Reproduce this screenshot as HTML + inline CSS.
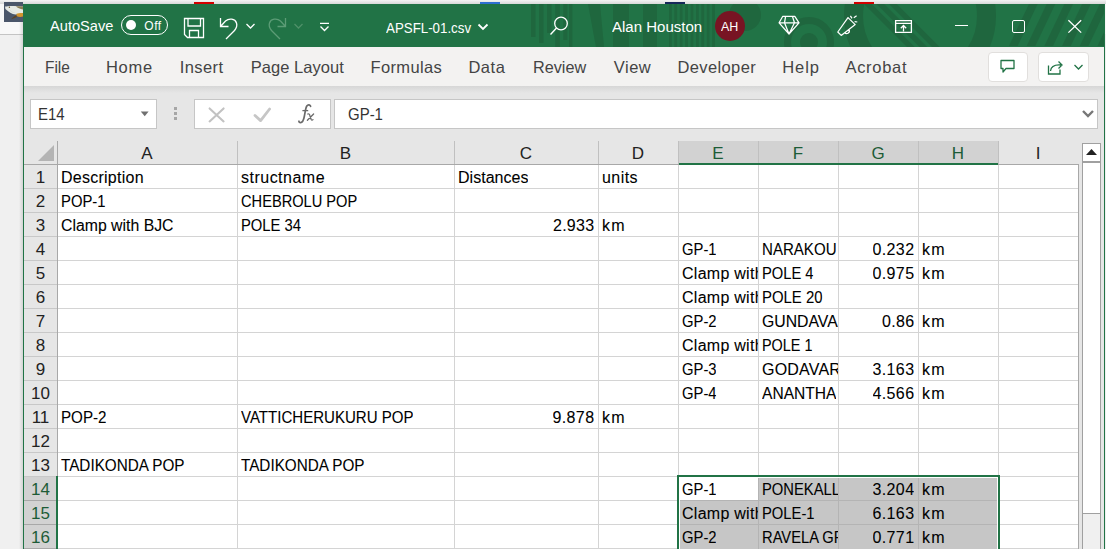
<!DOCTYPE html><html><head><meta charset="utf-8"><style>
*{box-sizing:border-box;margin:0;padding:0}
html,body{width:1106px;height:549px;overflow:hidden;background:#f0f0f0;font-family:"Liberation Sans",sans-serif}
div,span,svg{position:absolute}
.t{white-space:pre;line-height:1}
.tab{top:59px;font-size:16.5px;color:#444}
.c{font-size:16px;color:#000;-webkit-text-stroke:0.08px #000;white-space:pre;line-height:1;overflow:hidden}
.rh{font-size:17px;color:#222;line-height:1;text-align:center;width:33px;left:24px}
.ch{font-size:17px;color:#222;line-height:1;text-align:center;top:145px}
</style></head><body>
<div style="left:0;top:0;width:1106px;height:34px;background:#f8f8f8"></div>
<div style="left:0;top:34px;width:23px;height:1px;background:#c4c4c4"></div>
<div style="left:19px;top:0;width:4px;height:549px;background:linear-gradient(90deg,rgba(0,0,0,0),rgba(0,0,0,.12))"></div>
<div style="left:0;top:0;width:1106px;height:4px;background:linear-gradient(#f4f4f4,#d8d8d8)"></div>
<svg style="left:4px;top:2px" width="19" height="20" viewBox="4 2 19 20"><rect x="4" y="2" width="19" height="20" fill="#4b566a"/><path d="M5,6.6 C7,6 10,5.8 14,6 L23,6.4 L23,13 C20,13.6 18,14.4 15.5,14.6 C12,14.2 8.5,11.8 5.4,9 Z" fill="#e6e9e4"/><path d="M16,6.2 L23,6.4 L23,9.5 C20,8.8 17.5,8 16,6.2 Z" fill="#8a7e55"/><path d="M9,9.5 C11,11 13,12.5 15.5,13 C13,12.8 11,11.5 9,9.5 Z" fill="#b8bdb5"/><circle cx="9.4" cy="7.3" r="0.7" fill="#6d5a32"/><path d="M16.5,13.8 C18.5,13 21,13 23,13.2 L23,16.6 C21,17.4 18.5,17.2 16.5,16 Z" fill="#d3952d"/><path d="M11.2,19.2 C12.5,17.5 14,16 16.4,15.2 L16.8,17 C15,17.8 13,18.6 11.2,19.2 Z" fill="#5e4320"/></svg>
<div style="left:194px;top:2px;width:20px;height:2px;background:#d40000"></div>
<div style="left:480px;top:2px;width:20px;height:2px;background:#2f6fd1"></div>
<div style="left:665px;top:2px;width:20px;height:2px;background:#17285a"></div>
<div style="left:854px;top:2px;width:20px;height:2px;background:#d40000"></div>
<div style="left:23px;top:4px;width:1082px;height:545px;background:#e6e6e6"></div>
<div style="left:23px;top:4px;width:1px;height:545px;background:#217346"></div>
<div style="left:1104px;top:4px;width:1px;height:545px;background:#217346"></div>
<div style="left:24px;top:4px;width:1080px;height:43px;background:#217346;overflow:hidden"></div>
<svg style="left:24px;top:4px" width="1080" height="43" viewBox="24 4 1080 43">
<g fill="#1f663e" opacity="0.9">
<rect x="531" y="4" width="4.5" height="33"/>
<rect x="539" y="4" width="4.5" height="39"/>
<rect x="547" y="4" width="4.5" height="29"/>
<rect x="555.3" y="4" width="4.5" height="43"/>
<rect x="563.4" y="4" width="4" height="36"/>
<rect x="569" y="4" width="3.4" height="43"/>
<path d="M588,4 L600,4 L604,47 L596,47 Z"/>
<rect x="613" y="4" width="16" height="43"/>
<rect x="643" y="4" width="14" height="43"/>
<rect x="669.0" y="4" width="2.7" height="43"/>
<rect x="674.4" y="4" width="2.7" height="43"/>
<rect x="679.8" y="4" width="2.7" height="43"/>
<rect x="685.2" y="4" width="2.7" height="43"/>
<rect x="690.6" y="4" width="2.7" height="43"/>
<rect x="696.0" y="4" width="2.7" height="43"/>
<rect x="701.4" y="4" width="2.7" height="43"/>
<rect x="706.8" y="4" width="2.7" height="43"/>
<rect x="712.2" y="4" width="2.7" height="43"/>
<circle cx="745" cy="15" r="16"/>
</g>
<circle cx="809" cy="42" r="21.5" fill="none" stroke="#1f663e" stroke-width="7"/>
<circle cx="809" cy="42" r="9" fill="#1f663e"/>
<circle cx="920" cy="16" r="66.5" fill="none" stroke="#1f663e" stroke-width="19"/>
<polygon points="864.0,4 871.7,4 915.7,48 908.0,48" fill="#1f663e"/>
<polygon points="876.5,4 884.2,4 928.2,48 920.5,48" fill="#1f663e"/>
<polygon points="889.0,4 896.7,4 940.7,48 933.0,48" fill="#1f663e"/>
<polygon points="1009.0,46 1017.6,46 1037.6,4 1029.0,4" fill="#1f663e"/>
<polygon points="1026.7,46 1035.3,46 1055.3,4 1046.7,4" fill="#1f663e"/>
<polygon points="1044.4,46 1053.0,46 1073.0,4 1064.4,4" fill="#1f663e"/>
<polygon points="1062.1,46 1070.6999999999998,46 1090.6999999999998,4 1082.1,4" fill="#1f663e"/>
<polygon points="1079.8,46 1088.3999999999999,46 1108.3999999999999,4 1099.8,4" fill="#1f663e"/>
<polygon points="1097.5,46 1106.1,46 1126.1,4 1117.5,4" fill="#1f663e"/>
</svg>
<span class="t" style="left:49.80px;top:18px;font-size:15px;color:#fff;transform:scaleX(0.9754);transform-origin:0 0;">AutoSave</span>
<div style="left:121px;top:15px;width:47px;height:20px;border:1px solid #fff;border-radius:10px"></div>
<div style="left:126px;top:20px;width:10px;height:10px;background:#fff;border-radius:50%"></div>
<span class="t" style="left:144.30px;top:20px;font-size:12px;color:#fff;letter-spacing:0.500px;">Off</span>
<svg style="left:183px;top:17px" width="23" height="22" viewBox="0 0 23 22"><path d="M1.5,1.5 H20.5 V20.5 H4.5 L1.5,17.5 Z M5,1.5 V9 H17.5 V1.5 M6.5,20.5 V13.5 H15.5 V20.5" fill="none" stroke="#fff" stroke-width="1.3"/></svg>
<svg style="left:216px;top:15px" width="26" height="25" viewBox="0 0 26 25"><path d="M4.5,3 V11.5 H12.5 M4.5,11.5 L9.5,6 C13,3 19,3.5 20.5,8 C21.5,11 20.5,13 18.5,15.5 L10,24" fill="none" stroke="#fff" stroke-width="1.3"/></svg>
<svg style="left:245px;top:22px" width="11" height="8" viewBox="0 0 11 8"><path d="M1.5,2 L5.5,6 L9.5,2" fill="none" stroke="#fff" stroke-width="1.3"/></svg>
<svg style="left:264px;top:15px" width="26" height="25" viewBox="0 0 26 25"><path d="M21.5,3 V11.5 H13.5 M21.5,11.5 L16.5,6 C13,3 7,3.5 5.5,8 C4.5,11 5.5,13 7.5,15.5 L16,24" fill="none" stroke="#5c9c76" stroke-width="1.3"/></svg>
<svg style="left:293px;top:22px" width="11" height="8" viewBox="0 0 11 8"><path d="M1.5,2 L5.5,6 L9.5,2" fill="none" stroke="#4f9068" stroke-width="1.3"/></svg>
<svg style="left:318px;top:20px" width="13" height="13" viewBox="0 0 13 13"><path d="M2,3.3 H11 M2.5,6.5 L6.5,10.5 L10.5,6.5" fill="none" stroke="#fff" stroke-width="1.3"/></svg>
<span class="t" style="left:385.80px;top:20px;font-size:15.5px;color:#fff;transform:scaleX(0.8587);transform-origin:0 0;">APSFL-01.csv</span>
<svg style="left:476px;top:21px" width="14" height="11" viewBox="0 0 14 11"><path d="M2.5,3.5 L7,8 L11.5,3.5" fill="none" stroke="#fff" stroke-width="1.8"/></svg>
<svg style="left:548px;top:14px" width="22" height="23" viewBox="0 0 22 23"><circle cx="13" cy="9.5" r="6.3" fill="none" stroke="#fff" stroke-width="1.3"/><path d="M8.5,14 L2.5,20.5" stroke="#fff" stroke-width="1.4"/></svg>
<span class="t" style="left:611.70px;top:19px;font-size:15.5px;color:#fff;transform:scaleX(0.9689);transform-origin:0 0;">Alan Houston</span>
<div style="left:715px;top:11px;width:30px;height:30px;border-radius:50%;background:#781423"></div>
<span class="t" style="left:720.50px;top:20px;font-size:13px;color:#fff;transform:scaleX(0.9613);transform-origin:0 0;">AH</span>
<svg style="left:770px;top:10px" width="36" height="30" viewBox="770 10 36 30"><path d="M782.8,16.3 H794.8 L799,22.8 L789,34 L779.1,22.8 Z M779.1,22.8 H799 M785.6,16.3 L784.5,22.8 L789,34 L794.5,22.8 L792.4,16.3" fill="none" stroke="#fff" stroke-width="1.25" stroke-linejoin="round"/></svg>
<svg style="left:830px;top:10px" width="32" height="30" viewBox="830 10 32 30"><path d="M848,17.6 L855.2,24.6 L841.2,35.4 L837.8,32 Z M844.7,32.7 A2.65,2.65 0 0 0 848.9,29.5 M850.4,15.8 L852,18.4 M853.8,17.8 L856.6,15.8 M854.6,21.6 L857.3,22" fill="none" stroke="#fff" stroke-width="1.25" stroke-linejoin="round"/></svg>
<svg style="left:890px;top:15px" width="26" height="22" viewBox="890 15 26 22"><path d="M895.6,20.6 H911.4 V32.4 H895.6 Z M895.6,23.4 H911.4" fill="none" stroke="#fff" stroke-width="1.3"/><path d="M903.5,31.5 V25.6 M900.8,28.2 L903.5,25.5 L906.2,28.2" fill="none" stroke="#fff" stroke-width="1.3"/></svg>
<div style="left:955px;top:25px;width:13px;height:1.3px;background:#fff"></div>
<div style="left:1011.5px;top:20px;width:13px;height:13px;border:1.3px solid #fff;border-radius:2px"></div>
<svg style="left:1064px;top:16px" width="22" height="21" viewBox="1064 16 22 21"><path d="M1068.4,20.2 L1081.2,32.6 M1081.2,20.2 L1068.4,32.6" stroke="#fff" stroke-width="1.3"/></svg>
<div style="left:24px;top:47px;width:1080px;height:39px;background:#f3f2f1"></div>
<div style="left:24px;top:86px;width:1080px;height:7px;background:linear-gradient(#d6d6d6,#e6e6e6)"></div>
<span class="t tab" style="left:44.70px;transform:scaleX(0.9361);transform-origin:0 0">File</span>
<span class="t tab" style="left:106.00px;letter-spacing:0.700px">Home</span>
<span class="t tab" style="left:179.80px;letter-spacing:0.380px">Insert</span>
<span class="t tab" style="left:250.70px;letter-spacing:0.050px">Page Layout</span>
<span class="t tab" style="left:370.60px;letter-spacing:0.329px">Formulas</span>
<span class="t tab" style="left:468.40px;letter-spacing:0.567px">Data</span>
<span class="t tab" style="left:532.70px;transform:scaleX(0.9834);transform-origin:0 0">Review</span>
<span class="t tab" style="left:613.70px;letter-spacing:0.533px">View</span>
<span class="t tab" style="left:677.50px;letter-spacing:0.375px">Developer</span>
<span class="t tab" style="left:782.30px;letter-spacing:0.900px">Help</span>
<span class="t tab" style="left:845.50px;letter-spacing:0.683px">Acrobat</span>
<div style="left:988px;top:52px;width:40px;height:30px;border:1px solid #e1dfdd;border-radius:4px;background:#fff"></div>
<div style="left:1038px;top:52px;width:51px;height:30px;border:1px solid #e1dfdd;border-radius:4px;background:#fff"></div>
<svg style="left:998px;top:58px" width="19" height="17" viewBox="0 0 19 17"><path d="M3,2.5 H16 V10.5 H8 L5,14 V10.5 H3 Z" fill="none" stroke="#217346" stroke-width="1.3" stroke-linejoin="round"/></svg>
<svg style="left:1046px;top:60px" width="19" height="16" viewBox="0 0 19 16"><path d="M2.5,5.5 V14 H14 V9.5 M4.5,11 C5,6.5 9,4.5 15,5 M12.5,1.5 L16,5 L12.5,8.5" fill="none" stroke="#217346" stroke-width="1.3"/></svg>
<svg style="left:1073px;top:63px" width="11" height="8" viewBox="0 0 11 8"><path d="M1.5,2 L5.5,6 L9.5,2" fill="none" stroke="#217346" stroke-width="1.3"/></svg>
<div style="left:30px;top:99px;width:127px;height:30px;background:#fff;border:1px solid #c6c6c6"></div>
<span class="t" style="left:37.60px;top:107px;font-size:16px;color:#333;transform:scaleX(0.9333);transform-origin:0 0;">E14</span>
<div style="left:194px;top:99px;width:137px;height:30px;background:#fff;border:1px solid #c6c6c6"></div>
<div style="left:334px;top:99px;width:764px;height:30px;background:#fff;border:1px solid #c6c6c6"></div>
<span class="t" style="left:348.00px;top:107px;font-size:16px;color:#333;transform:scaleX(0.9357);transform-origin:0 0;">GP-1</span>
<svg style="left:138px;top:108px" width="14" height="12" viewBox="138 108 14 12"><polygon points="140.8,111.4 148.6,111.4 144.7,116.2" fill="#707070"/></svg>
<div style="left:174px;top:107px;width:3px;height:3px;background:#a6a6a6"></div>
<div style="left:174px;top:112px;width:3px;height:3px;background:#a6a6a6"></div>
<div style="left:174px;top:117px;width:3px;height:3px;background:#a6a6a6"></div>
<svg style="left:205px;top:104px" width="24" height="22" viewBox="205 104 24 22"><path d="M209.6,108.4 L223.6,121.4 M223.6,108.4 L209.6,121.4" stroke="#c2c2c2" stroke-width="2.1" stroke-linecap="round"/></svg>
<svg style="left:250px;top:104px" width="24" height="22" viewBox="250 104 24 22"><path d="M255,115.5 L260.6,120.6 L269.6,109" fill="none" stroke="#c6c6c6" stroke-width="2.8" stroke-linecap="round" stroke-linejoin="round"/></svg>
<svg style="left:290px;top:100px" width="32" height="28" viewBox="290 100 32 28"><path d="M310.6,106.3 C310.2,104.6 308,104.2 306.8,106 C305.6,108 305.2,112 304.4,116 C303.6,120.5 302.6,122.6 300.6,122.6 C299.4,122.6 298.6,122 299,121.2" fill="none" stroke="#6a6a6a" stroke-width="1.7" stroke-linecap="round"/><path d="M302.4,110.6 H308.2" stroke="#6a6a6a" stroke-width="1.3"/><path d="M307.8,114 C309,113.4 309.6,114.2 310,116 L311.2,119.4 C311.6,120.4 312.4,120.2 313,119.6 M313.6,114 L307.4,120.2" fill="none" stroke="#6a6a6a" stroke-width="1.3" stroke-linecap="round"/></svg>
<svg style="left:1081px;top:109px" width="14" height="10" viewBox="0 0 14 10"><path d="M2,2 L7,7 L12,2" fill="none" stroke="#777" stroke-width="2.4"/></svg>
<div style="left:24px;top:141px;width:1054px;height:23px;background:#e6e6e6"></div>
<div style="left:679px;top:141px;width:319px;height:23px;background:#d2d2d2"></div>
<div style="left:24px;top:164px;width:33px;height:385px;background:#e6e6e6"></div>
<div style="left:24px;top:476px;width:33px;height:73px;background:#d2d2d2"></div>
<div style="left:58px;top:165px;width:1020px;height:384px;background:#fff"></div>
<div style="left:237px;top:164px;width:1px;height:385px;background:#d4d4d4"></div>
<div style="left:454px;top:164px;width:1px;height:385px;background:#d4d4d4"></div>
<div style="left:598px;top:164px;width:1px;height:385px;background:#d4d4d4"></div>
<div style="left:678px;top:164px;width:1px;height:385px;background:#d4d4d4"></div>
<div style="left:758px;top:164px;width:1px;height:385px;background:#d4d4d4"></div>
<div style="left:838px;top:164px;width:1px;height:385px;background:#d4d4d4"></div>
<div style="left:918px;top:164px;width:1px;height:385px;background:#d4d4d4"></div>
<div style="left:998px;top:164px;width:1px;height:385px;background:#d4d4d4"></div>
<div style="left:58px;top:188px;width:1020px;height:1px;background:#d4d4d4"></div>
<div style="left:24px;top:188px;width:33px;height:1px;background:#c8c8c8"></div>
<div style="left:58px;top:212px;width:1020px;height:1px;background:#d4d4d4"></div>
<div style="left:24px;top:212px;width:33px;height:1px;background:#c8c8c8"></div>
<div style="left:58px;top:236px;width:1020px;height:1px;background:#d4d4d4"></div>
<div style="left:24px;top:236px;width:33px;height:1px;background:#c8c8c8"></div>
<div style="left:58px;top:260px;width:1020px;height:1px;background:#d4d4d4"></div>
<div style="left:24px;top:260px;width:33px;height:1px;background:#c8c8c8"></div>
<div style="left:58px;top:284px;width:1020px;height:1px;background:#d4d4d4"></div>
<div style="left:24px;top:284px;width:33px;height:1px;background:#c8c8c8"></div>
<div style="left:58px;top:308px;width:1020px;height:1px;background:#d4d4d4"></div>
<div style="left:24px;top:308px;width:33px;height:1px;background:#c8c8c8"></div>
<div style="left:58px;top:332px;width:1020px;height:1px;background:#d4d4d4"></div>
<div style="left:24px;top:332px;width:33px;height:1px;background:#c8c8c8"></div>
<div style="left:58px;top:356px;width:1020px;height:1px;background:#d4d4d4"></div>
<div style="left:24px;top:356px;width:33px;height:1px;background:#c8c8c8"></div>
<div style="left:58px;top:380px;width:1020px;height:1px;background:#d4d4d4"></div>
<div style="left:24px;top:380px;width:33px;height:1px;background:#c8c8c8"></div>
<div style="left:58px;top:404px;width:1020px;height:1px;background:#d4d4d4"></div>
<div style="left:24px;top:404px;width:33px;height:1px;background:#c8c8c8"></div>
<div style="left:58px;top:428px;width:1020px;height:1px;background:#d4d4d4"></div>
<div style="left:24px;top:428px;width:33px;height:1px;background:#c8c8c8"></div>
<div style="left:58px;top:452px;width:1020px;height:1px;background:#d4d4d4"></div>
<div style="left:24px;top:452px;width:33px;height:1px;background:#c8c8c8"></div>
<div style="left:58px;top:476px;width:1020px;height:1px;background:#d4d4d4"></div>
<div style="left:24px;top:476px;width:33px;height:1px;background:#c8c8c8"></div>
<div style="left:58px;top:500px;width:1020px;height:1px;background:#d4d4d4"></div>
<div style="left:24px;top:500px;width:33px;height:1px;background:#a8a8a8"></div>
<div style="left:58px;top:524px;width:1020px;height:1px;background:#d4d4d4"></div>
<div style="left:24px;top:524px;width:33px;height:1px;background:#a8a8a8"></div>
<div style="left:58px;top:548px;width:1020px;height:1px;background:#d4d4d4"></div>
<div style="left:24px;top:548px;width:33px;height:1px;background:#a8a8a8"></div>
<div style="left:679px;top:477px;width:319px;height:72px;background:#fff"></div>
<div style="left:680px;top:478px;width:317px;height:71px;background:#c6c6c6"></div>
<div style="left:680px;top:478px;width:78px;height:22px;background:#fff"></div>
<div style="left:758px;top:478px;width:1px;height:71px;background:#b4b4b4"></div>
<div style="left:838px;top:478px;width:1px;height:71px;background:#b4b4b4"></div>
<div style="left:918px;top:478px;width:1px;height:71px;background:#b4b4b4"></div>
<div style="left:680px;top:500px;width:317px;height:1px;background:#b4b4b4"></div>
<div style="left:680px;top:524px;width:317px;height:1px;background:#b4b4b4"></div>
<div style="left:237px;top:141px;width:1px;height:23px;background:#c0c0c0"></div>
<div style="left:454px;top:141px;width:1px;height:23px;background:#c0c0c0"></div>
<div style="left:598px;top:141px;width:1px;height:23px;background:#c0c0c0"></div>
<div style="left:678px;top:141px;width:1px;height:23px;background:#c0c0c0"></div>
<div style="left:758px;top:141px;width:1px;height:23px;background:#c0c0c0"></div>
<div style="left:838px;top:141px;width:1px;height:23px;background:#c0c0c0"></div>
<div style="left:918px;top:141px;width:1px;height:23px;background:#c0c0c0"></div>
<div style="left:998px;top:141px;width:1px;height:23px;background:#c0c0c0"></div>
<div style="left:57px;top:141px;width:1px;height:408px;background:#a8a8a8"></div>
<div style="left:24px;top:164px;width:1054px;height:1px;background:#a8a8a8"></div>
<div style="left:679px;top:163px;width:319px;height:2px;background:#217346"></div>
<div style="left:56px;top:476px;width:2px;height:73px;background:#217346"></div>
<div style="left:1078px;top:164px;width:1px;height:385px;background:#a8a8a8"></div>
<svg style="left:38px;top:145px" width="17" height="16"><polygon points="16,0 16,16 0,16" fill="#b4b4b4"/></svg>
<span class="t ch" style="left:57px;width:180px;color:#222">A</span>
<span class="t ch" style="left:237px;width:217px;color:#222">B</span>
<span class="t ch" style="left:454px;width:144px;color:#222">C</span>
<span class="t ch" style="left:598px;width:80px;color:#222">D</span>
<span class="t ch" style="left:678px;width:80px;color:#1d5c37">E</span>
<span class="t ch" style="left:758px;width:80px;color:#1d5c37">F</span>
<span class="t ch" style="left:838px;width:80px;color:#1d5c37">G</span>
<span class="t ch" style="left:918px;width:80px;color:#1d5c37">H</span>
<span class="t ch" style="left:998px;width:80px;color:#222">I</span>
<span class="t rh" style="top:169px;color:#222">1</span>
<span class="t rh" style="top:193px;color:#222">2</span>
<span class="t rh" style="top:217px;color:#222">3</span>
<span class="t rh" style="top:241px;color:#222">4</span>
<span class="t rh" style="top:265px;color:#222">5</span>
<span class="t rh" style="top:289px;color:#222">6</span>
<span class="t rh" style="top:313px;color:#222">7</span>
<span class="t rh" style="top:337px;color:#222">8</span>
<span class="t rh" style="top:361px;color:#222">9</span>
<span class="t rh" style="top:385px;color:#222">10</span>
<span class="t rh" style="top:409px;color:#222">11</span>
<span class="t rh" style="top:433px;color:#222">12</span>
<span class="t rh" style="top:457px;color:#222">13</span>
<span class="t rh" style="top:481px;color:#1d5c37">14</span>
<span class="t rh" style="top:505px;color:#1d5c37">15</span>
<span class="t rh" style="top:529px;color:#1d5c37">16</span>
<div style="left:677px;top:475px;width:323px;height:80px;border:2px solid #217346"></div>
<div style="left:58px;top:167px;width:179px;height:21px;overflow:hidden"><span class="c" style="left:3.00px;top:3px;letter-spacing:0.250px">Description</span></div>
<div style="left:238px;top:167px;width:216px;height:21px;overflow:hidden"><span class="c" style="left:3.00px;top:3px;letter-spacing:0.489px">structname</span></div>
<div style="left:455px;top:167px;width:143px;height:21px;overflow:hidden"><span class="c" style="left:3.00px;top:3px;letter-spacing:0.025px">Distances</span></div>
<div style="left:599px;top:167px;width:79px;height:21px;overflow:hidden"><span class="c" style="left:3.00px;top:3px;letter-spacing:0.425px">units</span></div>
<div style="left:58px;top:191px;width:179px;height:21px;overflow:hidden"><span class="c" style="left:3.00px;top:3px;transform:scaleX(0.9271);transform-origin:0 0">POP-1</span></div>
<div style="left:238px;top:191px;width:216px;height:21px;overflow:hidden"><span class="c" style="left:3.00px;top:3px;transform:scaleX(0.9142);transform-origin:0 0">CHEBROLU POP</span></div>
<div style="left:58px;top:215px;width:179px;height:21px;overflow:hidden"><span class="c" style="left:3.00px;top:3px;transform:scaleX(0.9886);transform-origin:0 0">Clamp with BJC</span></div>
<div style="left:238px;top:215px;width:216px;height:21px;overflow:hidden"><span class="c" style="left:3.00px;top:3px;transform:scaleX(0.9245);transform-origin:0 0">POLE 34</span></div>
<span class="c" style="left:553.00px;top:218px;letter-spacing:0.250px">2.933</span>
<div style="left:599px;top:215px;width:79px;height:21px;overflow:hidden"><span class="c" style="left:3.00px;top:3px;letter-spacing:1.200px">km</span></div>
<div style="left:679px;top:239px;width:79px;height:21px;overflow:hidden"><span class="c" style="left:3.00px;top:3px;transform:scaleX(0.9249);transform-origin:0 0">GP-1</span></div>
<div style="left:759px;top:239px;width:79px;height:21px;overflow:hidden"><span class="c" style="left:3.00px;top:3px;transform:scaleX(0.9418);transform-origin:0 0">NARAKOU</span></div>
<span class="c" style="left:872.50px;top:242px;letter-spacing:0.375px">0.232</span>
<div style="left:919px;top:239px;width:79px;height:21px;overflow:hidden"><span class="c" style="left:3.00px;top:3px;letter-spacing:1.200px">km</span></div>
<div style="left:679px;top:263px;width:79px;height:21px;overflow:hidden"><span class="c" style="left:3.00px;top:3px;letter-spacing:0.267px">Clamp with</span></div>
<div style="left:759px;top:263px;width:79px;height:21px;overflow:hidden"><span class="c" style="left:3.00px;top:3px;transform:scaleX(0.9196);transform-origin:0 0">POLE 4</span></div>
<span class="c" style="left:872.50px;top:266px;letter-spacing:0.375px">0.975</span>
<div style="left:919px;top:263px;width:79px;height:21px;overflow:hidden"><span class="c" style="left:3.00px;top:3px;letter-spacing:1.200px">km</span></div>
<div style="left:679px;top:287px;width:79px;height:21px;overflow:hidden"><span class="c" style="left:3.00px;top:3px;letter-spacing:0.267px">Clamp with</span></div>
<div style="left:759px;top:287px;width:79px;height:21px;overflow:hidden"><span class="c" style="left:3.00px;top:3px;transform:scaleX(0.9322);transform-origin:0 0">POLE 20</span></div>
<div style="left:679px;top:311px;width:79px;height:21px;overflow:hidden"><span class="c" style="left:3.00px;top:3px;transform:scaleX(0.9249);transform-origin:0 0">GP-2</span></div>
<div style="left:759px;top:311px;width:79px;height:21px;overflow:hidden"><span class="c" style="left:3.00px;top:3px;transform:scaleX(0.9870);transform-origin:0 0">GUNDAVA</span></div>
<span class="c" style="left:882.00px;top:314px;letter-spacing:0.300px">0.86</span>
<div style="left:919px;top:311px;width:79px;height:21px;overflow:hidden"><span class="c" style="left:3.00px;top:3px;letter-spacing:1.200px">km</span></div>
<div style="left:679px;top:335px;width:79px;height:21px;overflow:hidden"><span class="c" style="left:3.00px;top:3px;letter-spacing:0.267px">Clamp with</span></div>
<div style="left:759px;top:335px;width:79px;height:21px;overflow:hidden"><span class="c" style="left:3.00px;top:3px;transform:scaleX(0.9018);transform-origin:0 0">POLE 1</span></div>
<div style="left:679px;top:359px;width:79px;height:21px;overflow:hidden"><span class="c" style="left:3.00px;top:3px;transform:scaleX(0.9249);transform-origin:0 0">GP-3</span></div>
<div style="left:759px;top:359px;width:79px;height:21px;overflow:hidden"><span class="c" style="left:3.00px;top:3px;letter-spacing:0.200px">GODAVARI</span></div>
<span class="c" style="left:872.50px;top:362px;letter-spacing:0.375px">3.163</span>
<div style="left:919px;top:359px;width:79px;height:21px;overflow:hidden"><span class="c" style="left:3.00px;top:3px;letter-spacing:1.200px">km</span></div>
<div style="left:679px;top:383px;width:79px;height:21px;overflow:hidden"><span class="c" style="left:3.00px;top:3px;transform:scaleX(0.9249);transform-origin:0 0">GP-4</span></div>
<div style="left:759px;top:383px;width:79px;height:21px;overflow:hidden"><span class="c" style="left:3.00px;top:3px;transform:scaleX(0.9739);transform-origin:0 0">ANANTHA</span></div>
<span class="c" style="left:872.50px;top:386px;letter-spacing:0.375px">4.566</span>
<div style="left:919px;top:383px;width:79px;height:21px;overflow:hidden"><span class="c" style="left:3.00px;top:3px;letter-spacing:1.200px">km</span></div>
<div style="left:58px;top:407px;width:179px;height:21px;overflow:hidden"><span class="c" style="left:3.00px;top:3px;transform:scaleX(0.9479);transform-origin:0 0">POP-2</span></div>
<div style="left:238px;top:407px;width:216px;height:21px;overflow:hidden"><span class="c" style="left:3.00px;top:3px;transform:scaleX(0.9406);transform-origin:0 0">VATTICHERUKURU POP</span></div>
<span class="c" style="left:552.50px;top:410px;letter-spacing:0.375px">9.878</span>
<div style="left:599px;top:407px;width:79px;height:21px;overflow:hidden"><span class="c" style="left:3.00px;top:3px;letter-spacing:1.200px">km</span></div>
<div style="left:58px;top:455px;width:179px;height:21px;overflow:hidden"><span class="c" style="left:3.00px;top:3px;transform:scaleX(0.9537);transform-origin:0 0">TADIKONDA POP</span></div>
<div style="left:238px;top:455px;width:216px;height:21px;overflow:hidden"><span class="c" style="left:3.00px;top:3px;transform:scaleX(0.9537);transform-origin:0 0">TADIKONDA POP</span></div>
<div style="left:679px;top:479px;width:79px;height:21px;overflow:hidden"><span class="c" style="left:3.00px;top:3px;transform:scaleX(0.9249);transform-origin:0 0">GP-1</span></div>
<div style="left:759px;top:479px;width:79px;height:21px;overflow:hidden"><span class="c" style="left:3.00px;top:3px;transform:scaleX(0.9231);transform-origin:0 0">PONEKALL</span></div>
<span class="c" style="left:872.50px;top:482px;letter-spacing:0.375px">3.204</span>
<div style="left:919px;top:479px;width:79px;height:21px;overflow:hidden"><span class="c" style="left:3.00px;top:3px;letter-spacing:1.200px">km</span></div>
<div style="left:679px;top:503px;width:79px;height:21px;overflow:hidden"><span class="c" style="left:3.00px;top:3px;letter-spacing:0.267px">Clamp with</span></div>
<div style="left:759px;top:503px;width:79px;height:21px;overflow:hidden"><span class="c" style="left:3.00px;top:3px;transform:scaleX(0.9227);transform-origin:0 0">POLE-1</span></div>
<span class="c" style="left:872.50px;top:506px;letter-spacing:0.375px">6.163</span>
<div style="left:919px;top:503px;width:79px;height:21px;overflow:hidden"><span class="c" style="left:3.00px;top:3px;letter-spacing:1.200px">km</span></div>
<div style="left:679px;top:527px;width:79px;height:21px;overflow:hidden"><span class="c" style="left:3.00px;top:3px;transform:scaleX(0.9249);transform-origin:0 0">GP-2</span></div>
<div style="left:759px;top:527px;width:79px;height:21px;overflow:hidden"><span class="c" style="left:3.00px;top:3px;transform:scaleX(0.9199);transform-origin:0 0">RAVELA GP</span></div>
<span class="c" style="left:872.50px;top:530px;letter-spacing:0.375px">0.771</span>
<div style="left:919px;top:527px;width:79px;height:21px;overflow:hidden"><span class="c" style="left:3.00px;top:3px;letter-spacing:1.200px">km</span></div>
<div style="left:1082px;top:143px;width:19px;height:19px;background:#fff;border:1px solid #a0a0a0"></div>
<svg style="left:1085px;top:148px" width="13" height="9"><polygon points="6.5,1 12,7 1,7" fill="#222"/></svg>
<div style="left:1082px;top:162px;width:19px;height:387px;background:#f0f0f0;border-left:1px solid #a0a0a0;border-right:1px solid #a0a0a0"></div>
<div style="left:1082px;top:162px;width:19px;height:352px;background:#fff;border:1px solid #a0a0a0"></div>
</body></html>
